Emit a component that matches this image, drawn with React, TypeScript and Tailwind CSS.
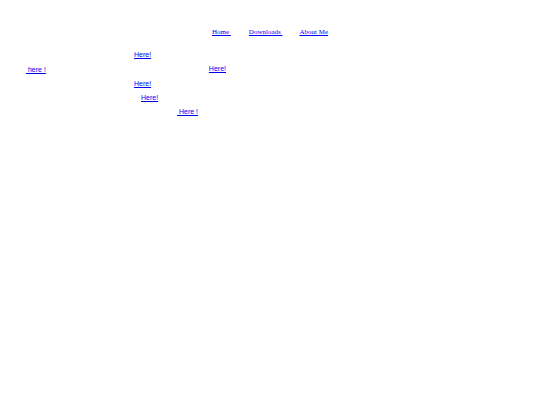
const serif = { fontFamily: '"Liberation Serif", "Times New Roman", serif' };

function Link({ children, className = "" }: { children: string; className?: string }) {
  return (
    <a href="#" className={`text-[#0000ee] underline whitespace-pre ${className}`}>
      {children}
    </a>
  );
}

export default function App() {
  return (
    <div className="w-[540px] h-[405px] bg-white">
      {/* top nav */}
      <nav
        className="flex h-[14px] items-center pt-[25px] box-content text-[7px] leading-[14px]"
        style={serif}
      >
        <Link className="ml-[212px]">{"Home\u00a0"}</Link>
        <Link className="ml-[18px]">{"Downloads\u00a0"}</Link>
        <Link className="ml-[17px]">About Me</Link>
      </nav>

      {/* scattered links */}
      <div className="flex flex-col text-[7px] leading-[14px] font-['Liberation_Sans',Arial,sans-serif]">
        <div className="flex h-[14px] items-center mt-[9px]">
          <Link className="ml-[134px]">Here!</Link>
        </div>
        <div className="flex h-[14px] items-center mt-[1px]">
          <Link className="ml-[26px]">{"\u00a0here !"}</Link>
          <Link className="ml-[163px] -mt-[2px]">Here!</Link>
        </div>
        <div className="flex h-[14px] items-center">
          <Link className="ml-[134px]">Here!</Link>
        </div>
        <div className="flex h-[14px] items-center">
          <Link className="ml-[141px]">Here!</Link>
        </div>
        <div className="flex h-[14px] items-center">
          <Link className="ml-[177px]">{"\u00a0Here !"}</Link>
        </div>
      </div>
    </div>
  );
}
